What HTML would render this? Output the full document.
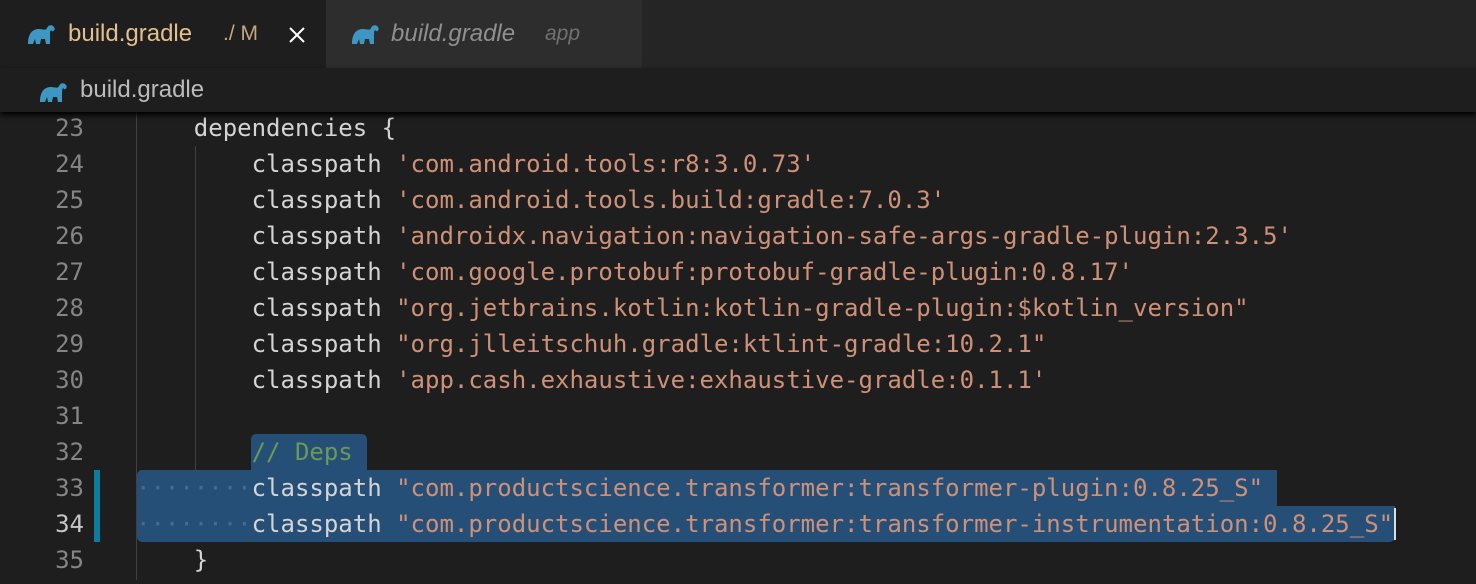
<!DOCTYPE html>
<html style="height:584px;overflow:hidden"><head><style>
body{margin:0;width:1476px;height:584px;background:#1e1e1e;overflow:hidden;position:relative;font-family:"Liberation Sans",sans-serif}
.tabs{position:absolute;left:0;top:0;width:1476px;height:68px;background:#252526}
.tab{position:absolute;top:0;height:68px;font-size:24px;line-height:68px}
.crumb{position:absolute;top:68px;left:0;width:1476px;height:44px;background:#1e1e1e;box-shadow:0 3px 5px #000;z-index:2}
.code{position:absolute;left:0;top:110px;width:1476px;height:474px;overflow:hidden;font-family:"DejaVu Sans Mono",monospace;font-size:24px;white-space:pre}
.ln{position:absolute;left:0;width:84px;text-align:right;color:#858585;height:36px;line-height:36px}
.l{position:absolute;left:136px;height:36px;line-height:36px;color:#d4d4d4}
.s{color:#ce9178}.c{color:#6a9955}
.sel{position:absolute;background:#264f78}
.g{position:absolute;width:1px;background:#404040}
</style></head><body>
<div class="tabs">
<div class="tab" style="left:0;width:326px;background:#1e1e1e">
<svg style="position:absolute;left:26px;top:22px" width="30" height="24" viewBox="0 0 30 24"><path d="M2 22 C2 12 6 7 13 7 C17 7 20 9 21 6 C22 3 26 2 28 5 C30 8 27 10 26 9 C25 7 24 9 24 12 L24 22 L20 22 L19 17 L15 17 L14 22 L10 22 L9 17 L7 22Z" fill="#3d97c2"/></svg>
<span style="position:absolute;left:68px;color:#e2c08d">build.gradle</span>
<span style="position:absolute;left:223px;color:#e2c08d;font-size:21px;opacity:.85">./ M</span>
<svg style="position:absolute;left:288px;top:26px" width="18" height="18" viewBox="0 0 18 18"><path d="M2 2L16 16M16 2L2 16" stroke="#fff" stroke-width="2"/></svg></div>
<div class="tab" style="left:326px;width:316px;background:#2d2d2d">
<svg style="position:absolute;left:24px;top:22px" width="30" height="24" viewBox="0 0 30 24"><path d="M2 22 C2 12 6 7 13 7 C17 7 20 9 21 6 C22 3 26 2 28 5 C30 8 27 10 26 9 C25 7 24 9 24 12 L24 22 L20 22 L19 17 L15 17 L14 22 L10 22 L9 17 L7 22Z" fill="#3d97c2"/></svg>
<span style="position:absolute;left:65px;color:#8f8f8f;font-style:italic">build.gradle</span>
<span style="position:absolute;left:219px;color:#707070;font-style:italic;font-size:21px">app</span></div>
</div>
<div class="crumb">
<svg style="position:absolute;left:38px;top:12px" width="30" height="24" viewBox="0 0 30 24"><path d="M2 22 C2 12 6 7 13 7 C17 7 20 9 21 6 C22 3 26 2 28 5 C30 8 27 10 26 9 C25 7 24 9 24 12 L24 22 L20 22 L19 17 L15 17 L14 22 L10 22 L9 17 L7 22Z" fill="#3d97c2"/></svg>
<span style="position:absolute;left:80px;top:8px;color:#bbb;font-size:24px">build.gradle</span></div>
<div class="code">
<div class="g" style="left:136px;top:0;height:470px"></div>
<div class="g" style="left:195px;top:36px;height:396px"></div>
<div class="sel" style="left:251px;top:324px;width:116px;height:36px;border-radius:5px 5px 0 0"></div>
<div class="sel" style="left:137px;top:360px;width:1140px;height:36px;border-radius:5px 0 0 0"></div>
<div class="sel" style="left:137px;top:396px;width:1258px;height:36px;border-radius:0 0 5px 5px"></div>
<div style="position:absolute;left:1394px;top:398px;width:2px;height:32px;background:#ddd"></div>
<div style="position:absolute;left:94px;top:360px;width:6px;height:72px;background:#0c7d9d"></div>
<div class="ln" style="top:0">23</div><div class="l" style="top:0">    dependencies {</div>
<div class="ln" style="top:36px">24</div><div class="l" style="top:36px">        classpath <span class="s">'com.android.tools:r8:3.0.73'</span></div>
<div class="ln" style="top:72px">25</div><div class="l" style="top:72px">        classpath <span class="s">'com.android.tools.build:gradle:7.0.3'</span></div>
<div class="ln" style="top:108px">26</div><div class="l" style="top:108px">        classpath <span class="s">'androidx.navigation:navigation-safe-args-gradle-plugin:2.3.5'</span></div>
<div class="ln" style="top:144px">27</div><div class="l" style="top:144px">        classpath <span class="s">'com.google.protobuf:protobuf-gradle-plugin:0.8.17'</span></div>
<div class="ln" style="top:180px">28</div><div class="l" style="top:180px">        classpath <span class="s">"org.jetbrains.kotlin:kotlin-gradle-plugin:$kotlin_version"</span></div>
<div class="ln" style="top:216px">29</div><div class="l" style="top:216px">        classpath <span class="s">"org.jlleitschuh.gradle:ktlint-gradle:10.2.1"</span></div>
<div class="ln" style="top:252px">30</div><div class="l" style="top:252px">        classpath <span class="s">'app.cash.exhaustive:exhaustive-gradle:0.1.1'</span></div>
<div class="ln" style="top:288px">31</div>
<div class="ln" style="top:324px">32</div><div class="l" style="top:324px">        <span class="c">// Deps</span></div>
<div class="ln" style="top:360px">33</div><div class="l" style="top:360px"><span style="color:#4b6a8a">········</span>classpath <span class="s">"com.productscience.transformer:transformer-plugin:0.8.25_S"</span></div>
<div class="ln" style="top:396px;color:#c6c6c6">34</div><div class="l" style="top:396px"><span style="color:#4b6a8a">········</span>classpath <span class="s">"com.productscience.transformer:transformer-instrumentation:0.8.25_S"</span></div>
<div class="ln" style="top:432px">35</div><div class="l" style="top:432px">    }</div>
</div>
</body></html>
